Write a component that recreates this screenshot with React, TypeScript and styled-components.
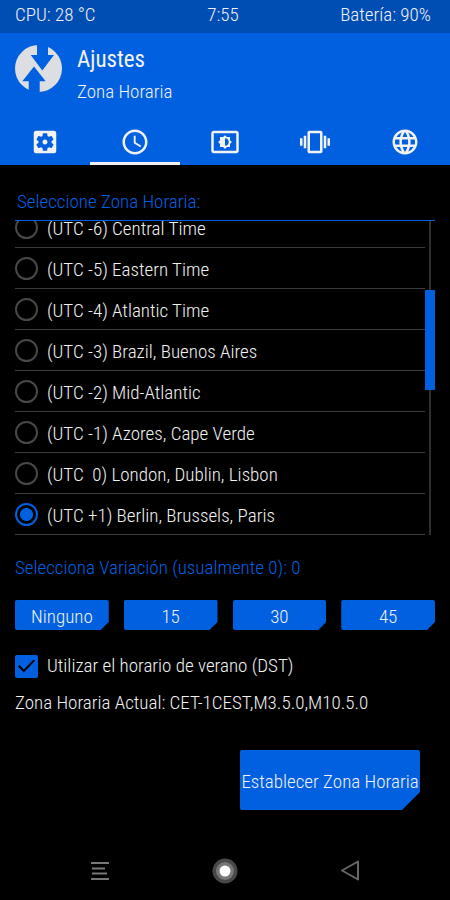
import React, { useState } from "react";
import styled, { createGlobalStyle } from "styled-components";
import {
  MdSettingsApplications,
  MdSchedule,
  MdOutlineSettingsBrightness,
  MdOutlineVibration,
  MdLanguage,
} from "react-icons/md";

const accent = "#0060e0";
const accentDark = "#004db4";
const textColor = "#f2f2f2";
const divider = "#3c3c3c";

const GlobalStyle = createGlobalStyle`
  * { box-sizing: border-box; }
  html, body { margin: 0; background: #000; }
  body, button, input {
    font-family: "Roboto Condensed", Roboto, sans-serif;
    font-size: 19px;
    font-weight: 340;
    line-height: 24px;
    color: ${textColor};
  }
`;

const Page = styled.div`
  display: flex;
  flex-direction: column;
  min-height: 100vh;
  background: #000;
`;

const StatusBar = styled.div`
  display: grid;
  grid-template-columns: 1fr auto 1fr;
  padding: 3px 19px 6px 15px;
  background: ${accentDark};
`;

const StatusItem = styled.span<{ $end?: boolean }>`
  text-align: ${(p) => (p.$end ? "right" : "left")};
`;

const Header = styled.header`
  background: ${accent};
`;

const Brand = styled.div`
  display: flex;
  gap: 15px;
  padding: 12px 15px 0;
  height: 87px;
`;

const Titles = styled.div`
  display: flex;
  flex-direction: column;
  gap: 5px;
`;

const Title = styled.h1`
  margin: 0;
  font-size: 23px;
  line-height: 30px;
  font-weight: 400;
`;

const Subtitle = styled.h2`
  margin: 0;
  font-size: 19px;
  line-height: 24px;
  font-weight: 340;
`;

const Tabs = styled.nav`
  display: grid;
  grid-template-columns: repeat(5, 1fr);
`;

const Tab = styled.button<{ $active: boolean }>`
  display: flex;
  justify-content: center;
  padding: 7px 0 5px;
  border: 0;
  border-bottom: 3px solid ${(p) => (p.$active ? textColor : "transparent")};
  background: none;
  svg { width: 30px; height: 30px; }
`;

const Main = styled.main`
  display: flex;
  flex-direction: column;
  padding: 25px 15px 0;
`;

const SectionTitle = styled.h3`
  margin: 0;
  padding: 0 2px 6px;
  font-size: 19px;
  line-height: 24px;
  font-weight: 340;
  color: ${accent};
  border-bottom: 1px solid ${accent};
`;

const ListArea = styled.div`
  display: flex;
  height: 314px;
`;

const ZoneList = styled.div`
  display: flex;
  flex: 1;
  flex-direction: column;
  justify-content: flex-end;
  overflow: hidden;
`;

const ZoneRow = styled.label`
  display: flex;
  flex: none;
  align-items: center;
  gap: 9px;
  height: 41px;
  border-bottom: 1px solid ${divider};
  white-space: pre;
`;

const ZoneName = styled.span`
  padding-top: 3px;
  line-height: 18px;
`;

const Radio = styled.input`
  appearance: none;
  width: 23px;
  height: 23px;
  margin: 0;
  border: 2px solid #484848;
  border-radius: 50%;
  &:checked {
    border-color: ${accent};
    background: radial-gradient(circle, ${accent} 0 6px, transparent 7px);
  }
`;

const ScrollTrack = styled.div`
  width: 10px;
  padding-top: 69px;
  background: linear-gradient(#2e2e2e, #2e2e2e) center / 2px 100% no-repeat;
`;

const ScrollThumb = styled.div`
  height: 100px;
  background: ${accent};
`;

const OffsetLabel = styled.p`
  margin: 21px 0 20px;
  color: ${accent};
`;

const OffsetRow = styled.div`
  display: grid;
  grid-template-columns: repeat(4, 1fr);
  gap: 15px;
`;

const ActionButton = styled.button<{ $large?: boolean }>`
  width: ${(p) => (p.$large ? "180px" : "auto")};
  height: ${(p) => (p.$large ? "60px" : "30px")};
  padding: 3px 0 0;
  border: 0;
  border-radius: 2px;
  background: ${accent};
  white-space: nowrap;
  --cut: ${(p) => (p.$large ? "18px" : "8px")};
  clip-path: polygon(0 0, 100% 0, 100% calc(100% - var(--cut)), calc(100% - var(--cut)) 100%, 0 100%);
`;

const CheckRow = styled.label`
  display: flex;
  align-items: center;
  gap: 9px;
  margin-top: 24px;
`;

const Checkbox = styled.input`
  appearance: none;
  display: grid;
  place-items: center;
  width: 23px;
  height: 23px;
  margin: 0;
  border: 2px solid #484848;
  border-radius: 2px;
  &:checked {
    border-color: ${accent};
    background: ${accent};
  }
  &:checked::before {
    content: "";
    width: 17px;
    height: 13px;
    background: #000;
    clip-path: polygon(0 54%, 9% 43%, 34% 76%, 92% 0, 100% 10%, 34% 100%);
  }
`;

const CurrentZone = styled.p`
  margin: 13px 0 35px;
`;

const Actions = styled.div`
  display: flex;
  justify-content: flex-end;
  padding-right: 15px;
`;

const NavBar = styled.nav`
  display: flex;
  justify-content: space-around;
  margin-top: auto;
  padding: 0 37px 14px;
`;

const NavButton = styled.button`
  display: flex;
  padding: 0;
  border: 0;
  background: none;
`;

const Logo = () => (
  <svg width="47" height="47" viewBox="0 0 47 47" aria-hidden="true">
    <defs>
      <clipPath id="disc">
        <circle cx="23.5" cy="23.5" r="23.5" />
      </clipPath>
    </defs>
    <rect width="47" height="47" fill="#dcdee2" clipPath="url(#disc)" />
    <path d="M22 -1H33V10H39L27.300 25.500L15.700 10H22Z" fill={accent} />
    <path d="M19 21.500L30.700 36.300H24.700V48H13.700V36.300H7.300Z" fill={accent} />
  </svg>
);

const tabs = [
  { label: "General", Icon: MdSettingsApplications },
  { label: "Zona Horaria", Icon: MdSchedule },
  { label: "Pantalla", Icon: MdOutlineSettingsBrightness },
  { label: "Vibración", Icon: MdOutlineVibration },
  { label: "Idioma", Icon: MdLanguage },
];

const zones = [
  "(UTC -6) Central Time",
  "(UTC -5) Eastern Time",
  "(UTC -4) Atlantic Time",
  "(UTC -3) Brazil, Buenos Aires",
  "(UTC -2) Mid-Atlantic",
  "(UTC -1) Azores, Cape Verde",
  "(UTC  0) London, Dublin, Lisbon",
  "(UTC +1) Berlin, Brussels, Paris",
];

const offsets = ["Ninguno", "15", "30", "45"];

export default function App() {
  const [tab, setTab] = useState(1);
  const [zone, setZone] = useState(7);
  const [offset, setOffset] = useState(0);
  const [dst, setDst] = useState(true);

  return (
    <Page>
      <GlobalStyle />
      <StatusBar>
        <StatusItem>CPU: 28 °C</StatusItem>
        <StatusItem>7:55</StatusItem>
        <StatusItem $end>Batería: 90%</StatusItem>
      </StatusBar>
      <Header>
        <Brand>
          <Logo />
          <Titles>
            <Title>Ajustes</Title>
            <Subtitle>Zona Horaria</Subtitle>
          </Titles>
        </Brand>
        <Tabs>
          {tabs.map(({ label, Icon }, i) => (
            <Tab key={label} aria-label={label} $active={i === tab} onClick={() => setTab(i)}>
              <Icon />
            </Tab>
          ))}
        </Tabs>
      </Header>
      <Main>
        <SectionTitle>Seleccione Zona Horaria:</SectionTitle>
        <ListArea>
          <ZoneList>
            {zones.map((name, i) => (
              <ZoneRow key={name}>
                <Radio type="radio" name="zone" checked={i === zone} onChange={() => setZone(i)} />
                <ZoneName>{name}</ZoneName>
              </ZoneRow>
            ))}
          </ZoneList>
          <ScrollTrack>
            <ScrollThumb />
          </ScrollTrack>
        </ListArea>
        <OffsetLabel>Selecciona Variación (usualmente 0): {offset}</OffsetLabel>
        <OffsetRow>
          {offsets.map((label, i) => (
            <ActionButton key={label} onClick={() => setOffset(i * 15)}>
              {label}
            </ActionButton>
          ))}
        </OffsetRow>
        <CheckRow>
          <Checkbox type="checkbox" checked={dst} onChange={() => setDst(!dst)} />
          <span>Utilizar el horario de verano (DST)</span>
        </CheckRow>
        <CurrentZone>Zona Horaria Actual: CET-1CEST,M3.5.0,M10.5.0</CurrentZone>
        <Actions>
          <ActionButton $large>Establecer Zona Horaria</ActionButton>
        </Actions>
      </Main>
      <NavBar>
        <NavButton aria-label="Menú">
          <svg width="30" height="30" viewBox="0 0 30 30" stroke="#777" strokeWidth="2">
            <path d="M6 7H24M7 12.500H20M7 17.500H22M6 23H24" />
          </svg>
        </NavButton>
        <NavButton aria-label="Inicio">
          <svg width="30" height="30" viewBox="0 0 30 30">
            <circle cx="15" cy="15" r="12.500" fill="#484848" />
            <circle cx="15" cy="15" r="9" fill="#777" />
            <circle cx="15" cy="15" r="5.500" fill="#fff" />
          </svg>
        </NavButton>
        <NavButton aria-label="Atrás">
          <svg width="30" height="30" viewBox="0 0 30 30" fill="none" stroke="#666" strokeWidth="2">
            <path d="M23 5.500V23.500L7 14.500Z" strokeLinejoin="round" />
          </svg>
        </NavButton>
      </NavBar>
    </Page>
  );
}
